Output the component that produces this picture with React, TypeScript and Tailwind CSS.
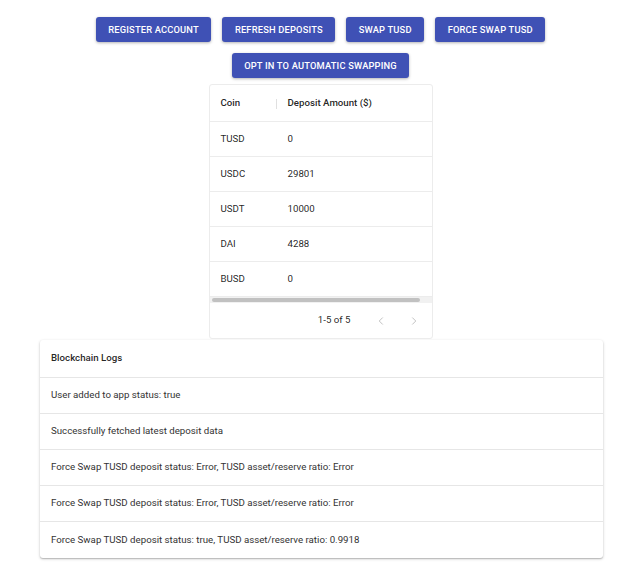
import React from "react";

const buttons1 = ["Register Account", "Refresh Deposits", "Swap TUSD", "Force Swap TUSD"];
const rows = [
  ["TUSD", "0"],
  ["USDC", "29801"],
  ["USDT", "10000"],
  ["DAI", "4288"],
  ["BUSD", "0"],
];
const logs = [
  "User added to app status: true",
  "Successfully fetched latest deposit data",
  "Force Swap TUSD deposit status: Error, TUSD asset/reserve ratio: Error",
  "Force Swap TUSD deposit status: Error, TUSD asset/reserve ratio: Error",
  "Force Swap TUSD deposit status: true, TUSD asset/reserve ratio: 0.9918",
];

function Btn({ label }: { label: string }) {
  return (
    <button className="h-[25px] px-[12.5px] rounded-[3px] bg-[#3f51b5] text-white uppercase text-[9.3px] font-medium tracking-[0.02em] shadow-[0_1px_3px_rgba(0,0,0,0.3)] leading-none">
      {label}
    </button>
  );
}

export default function App() {
  return (
    <div className="w-[619px] h-[573px] bg-white text-[rgba(0,0,0,0.87)]" style={{ fontFamily: "Roboto, 'Liberation Sans', sans-serif" }}>
      <div className="pt-[17px] pl-[22px] flex flex-col items-center">
        <div className="flex gap-[11px]">
          {buttons1.map((b) => (
            <Btn key={b} label={b} />
          ))}
        </div>
        <div className="mt-[10px]">
          <Btn label="Opt in to automatic swapping" />
        </div>
        <div className="mt-[6px] w-[224px] border border-[#ececec] rounded-[3px] text-[9.7px]">
          <div className="h-[37px] flex items-center border-b border-[#ececec] font-medium">
            <div className="w-[67px] pl-[11px] relative flex items-center h-full">
              Coin
              <span className="absolute right-0 top-[14px] h-[10px] w-px bg-[#e0e0e0]" />
            </div>
            <div className="pl-[11px]">Deposit Amount ($)</div>
          </div>
          {rows.map(([c, v]) => (
            <div key={c} className="h-[35px] flex items-center border-b border-[#ececec]">
              <div className="w-[67px] pl-[11px]">{c}</div>
              <div className="pl-[11px]">{v}</div>
            </div>
          ))}
          <div className="h-[6px] bg-[#f1f1f1] flex items-center px-[2px]">
            <div className="h-[4px] w-[208px] rounded-full bg-[#c1c1c1]" />
          </div>
          <div className="h-[35px] flex items-center justify-end pr-[11px]">
            <span className="mr-[23px]">1-5 of 5</span>
            <svg width="14" height="14" viewBox="0 0 24 24" className="mr-[19px]">
              <path d="M15 6l-6 6 6 6" fill="none" stroke="#bdbdbd" strokeWidth="1.6" />
            </svg>
            <svg width="14" height="14" viewBox="0 0 24 24">
              <path d="M9 6l6 6-6 6" fill="none" stroke="#bdbdbd" strokeWidth="1.6" />
            </svg>
          </div>
        </div>
      </div>
      <div className="ml-[40px] mt-[1px] w-[563px] bg-white rounded-[3px] shadow-[0_1px_3px_rgba(0,0,0,0.22),0_1px_1px_rgba(0,0,0,0.14)] text-[9.7px]">
        <div className="h-[38px] flex items-center pl-[11px] font-medium border-b border-[#e6e6e6]">Blockchain Logs</div>
        {logs.map((l, i) => (
          <div key={i} className={`h-[36px] flex items-center pl-[11px] text-[#333] ${i < logs.length - 1 ? "border-b border-[#e6e6e6]" : ""}`}>
            {l}
          </div>
        ))}
      </div>
    </div>
  );
}
